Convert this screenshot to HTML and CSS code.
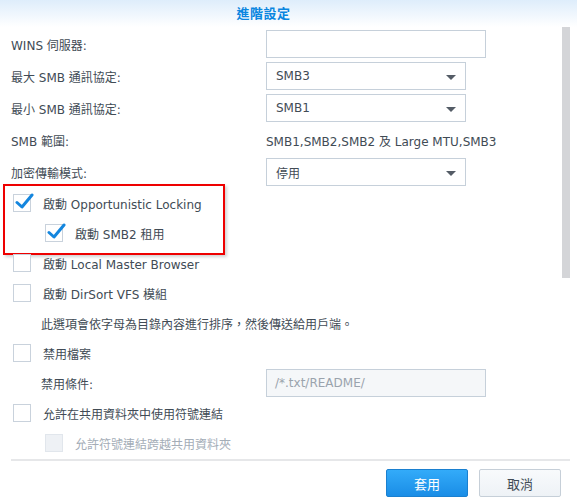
FILE: index.html
```html
<!DOCTYPE html>
<html lang="zh-Hant">
<head>
<meta charset="utf-8">
<title>進階設定</title>
<link rel="stylesheet" href="styles.css">
</head>
<body>
<div class="dialog">
  <div class="header"><span class="title">進階設定</span></div>
  <div class="body">
    <div class="content">
      <div class="frow"><span class="label">WINS 伺服器:</span><span class="input"></span></div>
      <div class="frow"><span class="label">最大 SMB 通訊協定:</span><span class="select">SMB3<i class="arrow"></i></span></div>
      <div class="frow"><span class="label">最小 SMB 通訊協定:</span><span class="select">SMB1<i class="arrow"></i></span></div>
      <div class="frow"><span class="label">SMB 範圍:</span><span class="value">SMB1,SMB2,SMB2 及 Large MTU,SMB3</span></div>
      <div class="frow"><span class="label">加密傳輸模式:</span><span class="select">停用<i class="arrow"></i></span></div>

      <div class="group">
        <div class="crow"><span class="cb checked"><svg viewBox="0 0 20 20"><path d="M3 10.5 L8 15 L18 3" fill="none" stroke="#1486de" stroke-width="3" stroke-linecap="round" stroke-linejoin="round"/></svg></span><span>啟動 Opportunistic Locking</span></div>
        <div class="crow sub"><span class="cb checked"><svg viewBox="0 0 20 20"><path d="M3 10.5 L8 15 L18 3" fill="none" stroke="#1486de" stroke-width="3" stroke-linecap="round" stroke-linejoin="round"/></svg></span><span>啟動 SMB2 租用</span></div>
      </div>
      <div class="crow"><span class="cb"></span><span>啟動 Local Master Browser</span></div>
      <div class="crow"><span class="cb"></span><span>啟動 DirSort VFS 模組</span></div>
      <div class="crow indent"><span>此選項會依字母為目錄內容進行排序，然後傳送給用戶端。</span></div>
      <div class="crow"><span class="cb"></span><span>禁用檔案</span></div>
      <div class="crow indent"><span class="sublabel">禁用條件:</span><span class="input disabled">/*.txt/README/</span></div>
      <div class="crow"><span class="cb"></span><span>允許在共用資料夾中使用符號連結</span></div>
      <div class="crow sub disabled-row"><span class="cb dis"></span><span>允許符號連結跨越共用資料夾</span></div>
    </div>
    <div class="scrollbar"></div>
  </div>
  <div class="footer">
    <button class="btn primary">套用</button>
    <button class="btn">取消</button>
  </div>
</div>
</body>
</html>
```

FILE: styles.css
```css
* { box-sizing: border-box; }
html, body { margin: 0; padding: 0; background: #fff; }
body {
  width: 577px;
  height: 502px;
  overflow: hidden;
  font-family: "DejaVu Sans", "Noto Sans CJK TC", sans-serif;
  font-size: 12px;
  color: #414b55;
}
.dialog { width: 577px; height: 502px; display: flex; flex-direction: column; }
.header {
  height: 27px;
  background: linear-gradient(#deedfb, #ffffff);
  display: flex;
  justify-content: center;
  align-items: flex-start;
  padding-top: 3px;
  padding-right: 50px;
}
.title { color: #0a86e0; font-weight: bold; font-size: 13px; letter-spacing: 0.5px; }
.body { display: flex; height: 432px; position: relative; }
.content { flex: 1; padding: 3px 0 0 11px; }
.scrollbar { width: 8px; height: 251px; background: #d4d5d8; margin: 0 7px 0 0; }
.frow { display: flex; align-items: center; height: 28px; margin-bottom: 4px; }
.label { width: 255px; }
.input {
  width: 220px; height: 28px;
  border: 1px solid #c6d0da;
  background: #fff;
  display: flex; align-items: center;
  padding-left: 8px;
}
.input.disabled { background: #f5f7f9; color: #9aa3ad; }
.select {
  width: 200px; height: 28px;
  border: 1px solid #c6d0da;
  display: flex; align-items: center;
  padding-left: 9px;
  position: relative;
}
.arrow {
  position: absolute; right: 9px; top: 12px;
  width: 0; height: 0;
  border-left: 5px solid transparent;
  border-right: 5px solid transparent;
  border-top: 5px solid #545c66;
}
.value { white-space: nowrap; }
.group { position: relative; margin-top: -2px; }
.group::before {
  content: "";
  position: absolute;
  left: -8px; top: -4px;
  width: 218px; height: 67px;
  border: 2px solid #ee0000;
  box-shadow: 2px 2px 3px rgba(0,0,0,0.18);
  pointer-events: none;
}
.crow { display: flex; align-items: center; height: 30px; }
.crow.sub { padding-left: 32px; }
.crow.indent { padding-left: 30px; }
.cb {
  width: 18px; height: 18px;
  border: 1px solid #c9d2dc;
  background: #fff;
  margin: 0 12px 0 2px;
  position: relative;
  flex: none;
}
.cb svg { position: absolute; left: 0px; top: -3px; width: 20px; height: 20px; }
.cb.dis { background: #eef1f5; border-color: #e1e6ec; }
.disabled-row { color: #a4adb7; }
.sublabel { width: 225px; }
.footer {
  flex: 1;
  border-top: 2px solid #e6e7e9;
  margin: 0 7px 0 11px;
  display: flex;
  justify-content: flex-end;
  align-items: flex-start;
  padding-top: 8px;
  gap: 11px;
  padding-right: 9px;
}
.btn {
  width: 82px; height: 28px;
  border: 1px solid #c6cfd8;
  border-radius: 2px;
  background: linear-gradient(#f8fafc, #eef2f6);
  font-family: "DejaVu Sans", "Noto Sans CJK TC", sans-serif;
  font-size: 13px;
  color: #414b55;
  padding: 0;
}
.btn.primary {
  background: linear-gradient(#33abf9, #1a8de6);
  border-color: #1a80d0;
  color: #fff;
}
```
